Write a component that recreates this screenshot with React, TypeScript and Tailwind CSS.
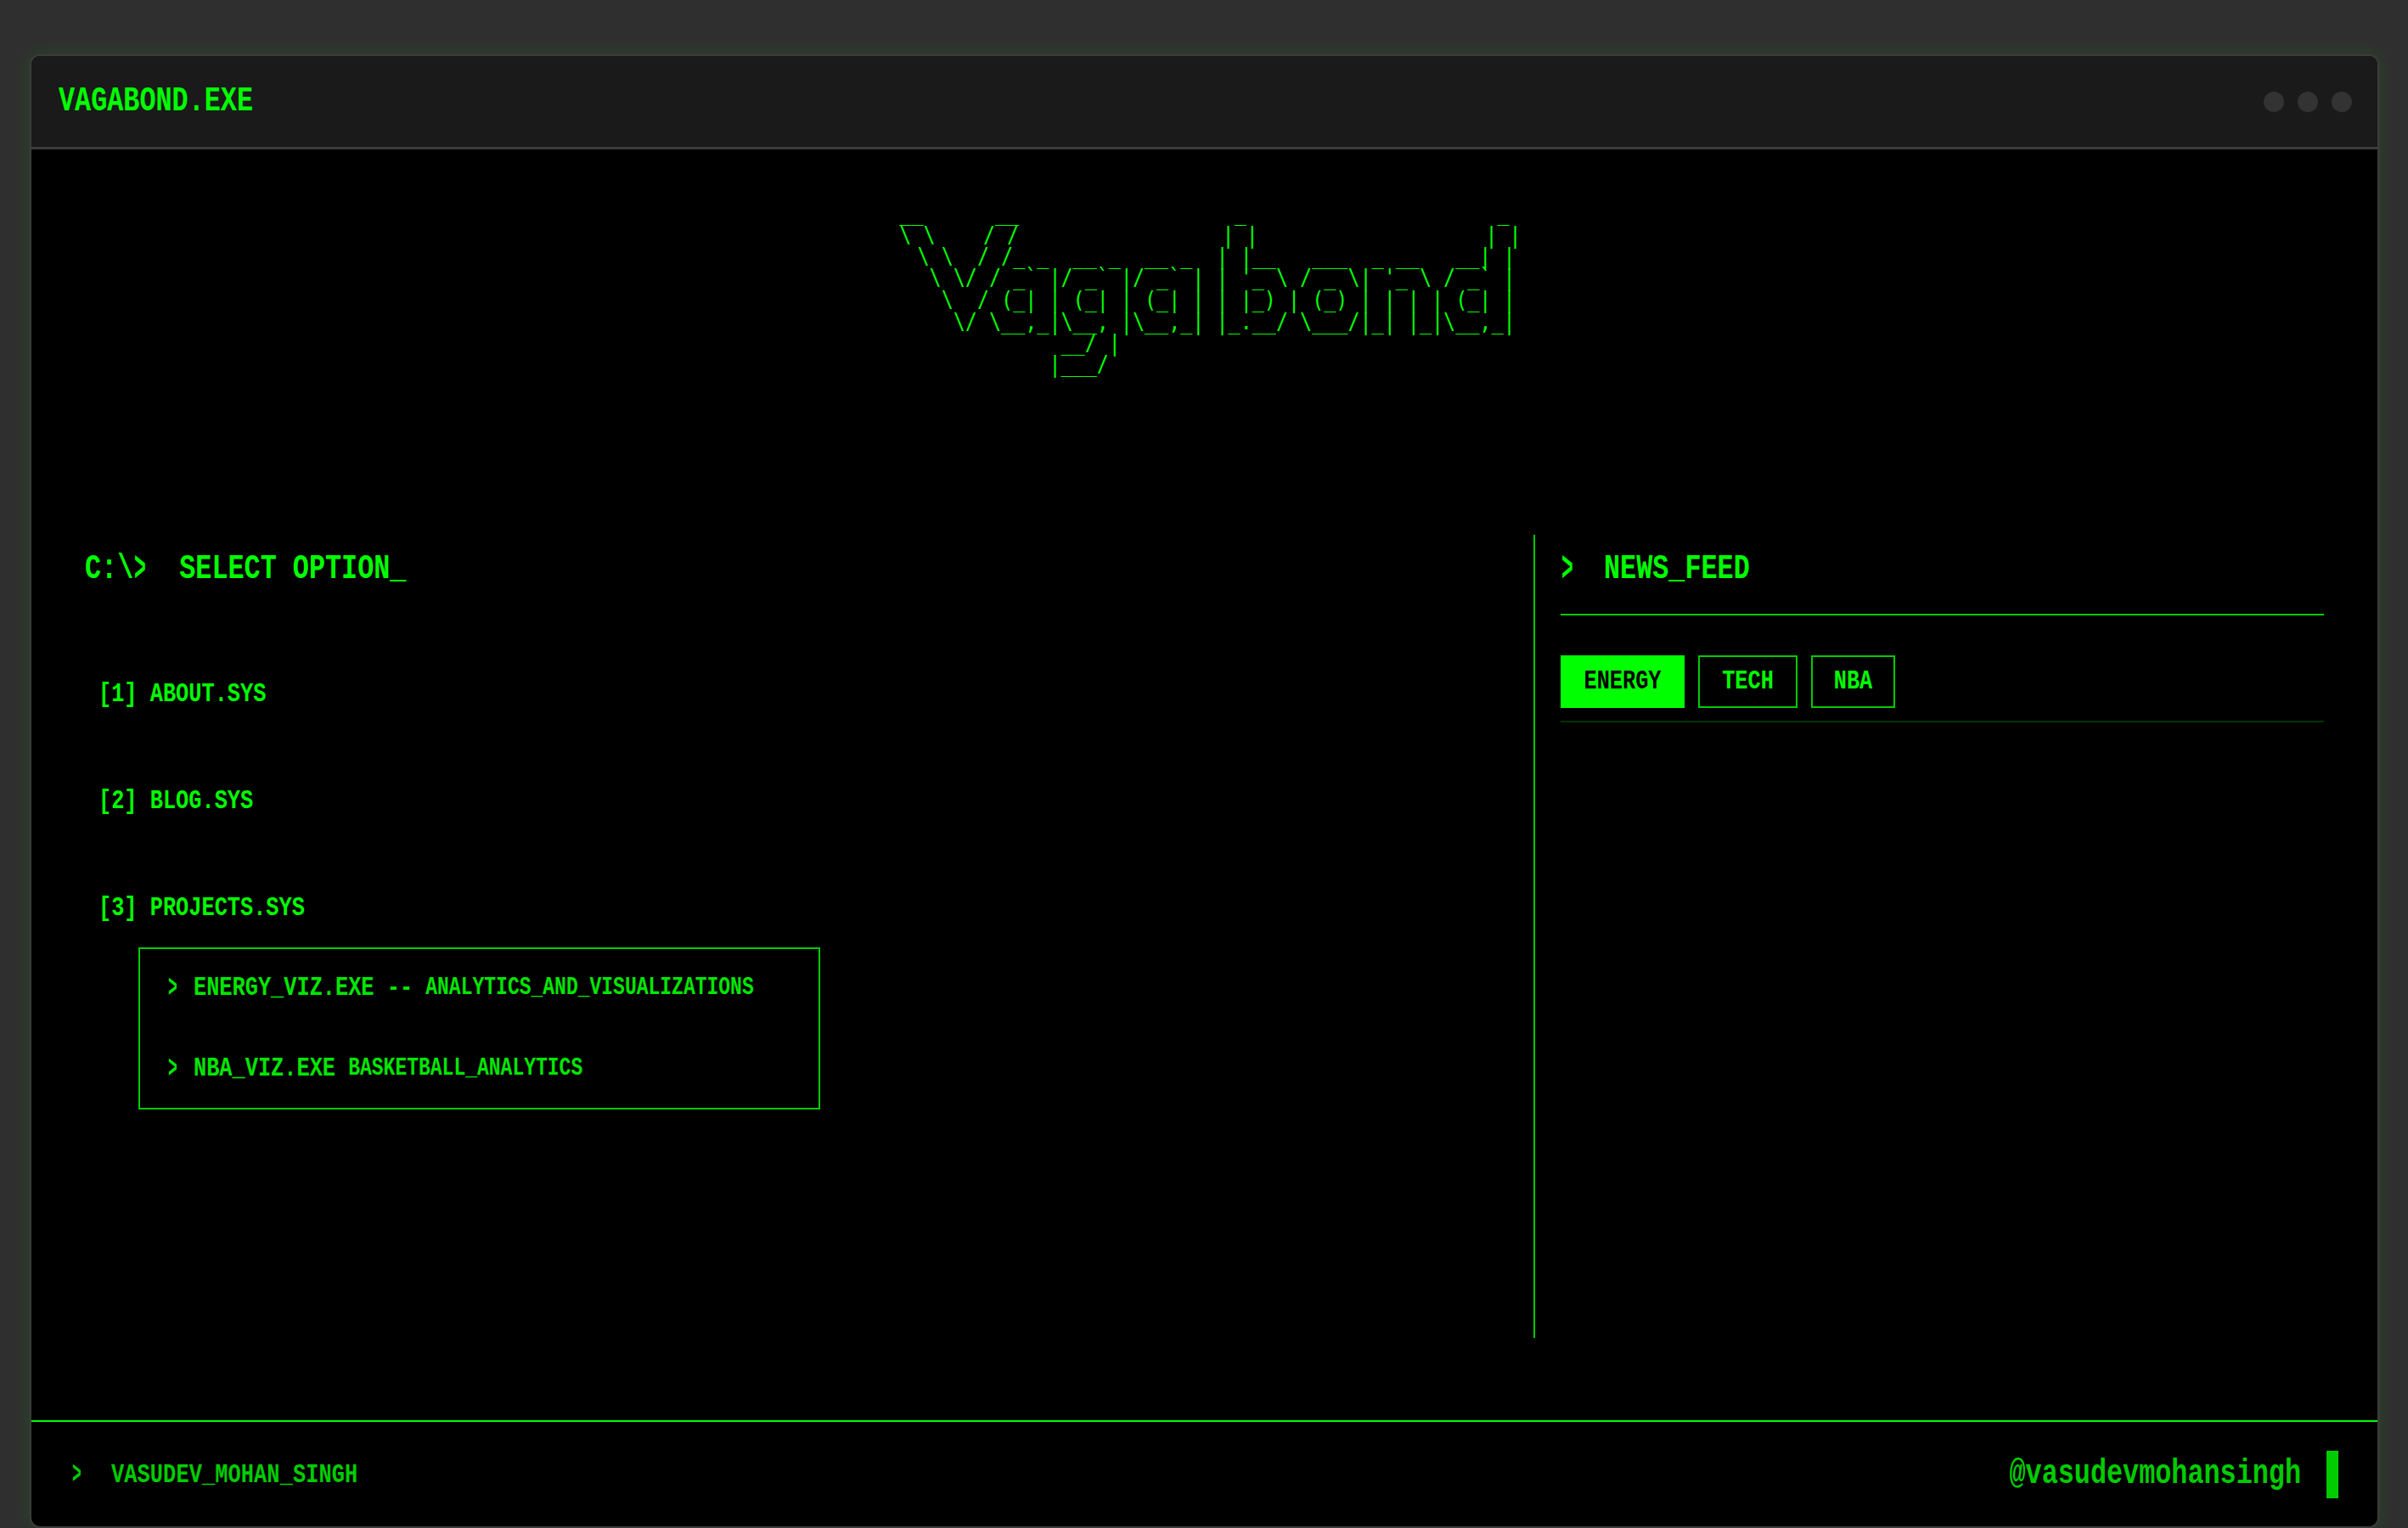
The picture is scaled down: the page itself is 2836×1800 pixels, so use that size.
const sp = (n: number) => " ".repeat(n);

const ART = [
  "__      __" + sp(18) + "_" + sp(21) + "_ ",
  "\\ \\    / /" + sp(17) + "| |" + sp(19) + "| |",
  " \\ \\  / /_ _  __ _  __ _  | |__   ___  _ __   __| |",
  "  \\ \\/ / _` |/ _` |/ _` | | '_ \\ / _ \\| '_ \\ / _` |",
  "   \\  / (_| | (_| | (_| | | |_) | (_) | | | | (_| |",
  "    \\/ \\__,_|\\__, |\\__,_| |_.__/ \\___/|_| |_|\\__,_|",
  sp(13) + "__/ |" + sp(33),
  sp(12) + "|___/" + sp(34),
].join("\n");

const MENU = ["[1] ABOUT.SYS", "[2] BLOG.SYS", "[3] PROJECTS.SYS"];

const BIG = "inline-block scale-y-[1.27] text-[31.8px] leading-none font-bold whitespace-pre";
const MID = "inline-block scale-y-[1.25] text-[25.3px] leading-none font-bold whitespace-pre";
const SUB = "inline-block scale-y-[1.25] text-[23px] leading-none font-bold whitespace-pre";

// the pixel font's > is narrow and tall, so squeeze the mono one
const CHEVRON_BIG = "inline-block w-[19px] origin-left scale-x-[0.72] scale-y-[1.55] text-[32px] leading-none font-bold";
const CHEVRON_MID = "inline-block w-[15px] origin-left scale-x-[0.72] scale-y-[1.5] text-[25px] leading-none font-bold";

const SubItem = ({ name, sep, desc }: { name: string; sep: string; desc: string }) => {
  return (
    <div className="flex h-[40px] items-center text-[#00e600]">
      <span className={CHEVRON_MID + " mr-[15px]"}>{">"}</span>
      <span className={MID}>{name + sep}</span>
      <span className={SUB}>{desc}</span>
    </div>
  );
};

const App = () => {
  return (
    <div className="h-[1800px] overflow-hidden bg-[#2f2f2f] pt-[64px] pr-[34px] pl-[35px] font-['Liberation_Mono',monospace] text-[#00ff00]">
      <div className="flex h-[1736px] flex-col overflow-hidden rounded-[12px] border-2 border-[#3c3c3c] bg-black shadow-[0_0_22px_rgba(0,255,0,0.12)]">
        <header className="flex h-[110px] shrink-0 items-center justify-between border-b-[3px] border-[#3c3c3c] bg-[#1a1a1a] pr-[30px] pl-[32px]">
          <span className={BIG + " mt-[3px]"}>VAGABOND.EXE</span>
          <div className="flex gap-[16px]">
            <span className="h-[24px] w-[24px] rounded-full bg-[#333333]" />
            <span className="h-[24px] w-[24px] rounded-full bg-[#333333]" />
            <span className="h-[24px] w-[24px] rounded-full bg-[#333333]" />
          </div>
        </header>

        <main className="flex flex-1 flex-col px-[63px]">
          <div className="flex h-[454px] shrink-0 justify-center pt-[63px] pl-[14px]">
            <pre className="origin-top scale-y-[1.12] text-center font-['DejaVu_Sans_Mono',monospace] text-[23.4px] leading-[22.74px] text-[#00ff00]">{ART}</pre>
          </div>

          <div className="flex h-[946px] shrink-0">
            <section className="flex-1">
              <div className="flex h-[80px] items-center pt-[3px]">
                <span className={BIG}>{"C:\\"}</span>
                <span className={CHEVRON_BIG + " mr-[34px] ml-[1px]"}>{">"}</span>
                <span className={BIG}>SELECT OPTION_</span>
              </div>
              <div className="mt-[60px] flex flex-col gap-[32px]">
                {MENU.map((item) => (
                  <div key={item} className="flex h-[94px] items-center pt-[1px] pl-[16px]">
                    <span className={MID}>{item}</span>
                  </div>
                ))}
              </div>
              <div className="ml-[63px] flex w-[803px] flex-col gap-[55px] border-2 border-[#00cc00] px-[33px] py-[26px]">
                <SubItem name="ENERGY_VIZ.EXE" sep=" -- " desc="ANALYTICS_AND_VISUALIZATIONS" />
                <SubItem name="NBA_VIZ.EXE" sep=" " desc="BASKETBALL_ANALYTICS" />
              </div>
            </section>

            <aside className="w-[931px] shrink-0 border-l-2 border-[#00cc00] pl-[30px]">
              <div className="flex h-[95px] items-start border-b-2 border-[#00cc00]">
                <div className="flex h-[80px] items-center pt-[3px] pl-[1px]">
                  <span className={CHEVRON_BIG + " mr-[31px]"}>{">"}</span>
                  <span className={BIG}>NEWS_FEED</span>
                </div>
              </div>
              <div className="mt-[47px] flex gap-[16px] border-b-2 border-[#003300] pb-[15px]">
                <button className="flex h-[62px] w-[146px] items-center justify-center bg-[#00ff00] text-black">
                  <span className={MID}>ENERGY</span>
                </button>
                <button className="flex h-[62px] w-[117px] items-center justify-center border-2 border-[#00cc00]">
                  <span className={MID}>TECH</span>
                </button>
                <button className="flex h-[62px] w-[99px] items-center justify-center border-2 border-[#00cc00]">
                  <span className={MID}>NBA</span>
                </button>
              </div>
            </aside>
          </div>
        </main>

        <footer className="flex h-[125px] shrink-0 items-center justify-between border-t-2 border-[#00ff00] pr-[46px] pl-[48px] text-[#00cc00]">
          <div className="flex items-center pt-[2px]">
            <span className={CHEVRON_MID + " mr-[31px]"}>{">"}</span>
            <span className={MID + " tracking-[0.1px]"}>VASUDEV_MOHAN_SINGH</span>
          </div>
          <div className="flex items-center gap-[30px]">
            <span className={BIG + " mt-[2px]"}>@vasudevmohansingh</span>
            <span className="h-[56px] w-[14px] bg-[#00cc00]" />
          </div>
        </footer>
      </div>
    </div>
  );
};

export default App;
